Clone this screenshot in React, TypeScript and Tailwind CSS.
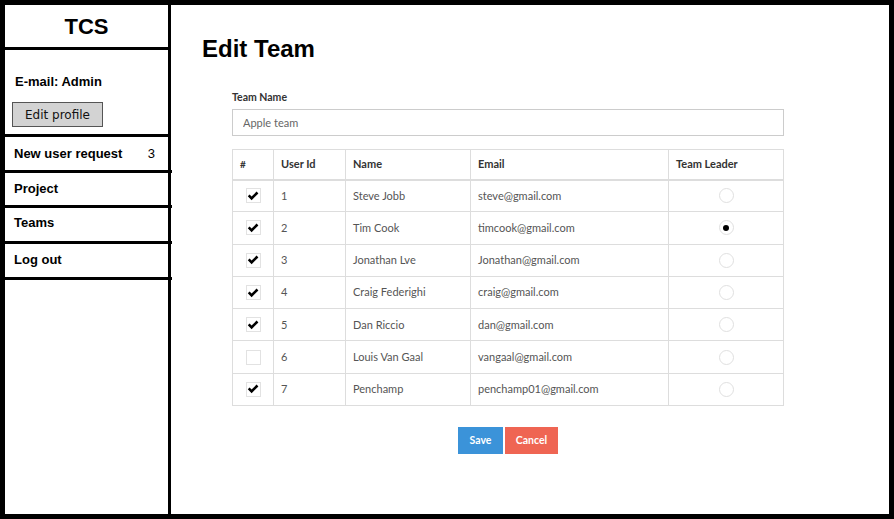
const members = [
  { id: 1, name: "Steve Jobb", email: "steve@gmail.com", checked: true, leader: false },
  { id: 2, name: "Tim Cook", email: "timcook@gmail.com", checked: true, leader: true },
  { id: 3, name: "Jonathan Lve", email: "Jonathan@gmail.com", checked: true, leader: false },
  { id: 4, name: "Craig Federighi", email: "craig@gmail.com", checked: true, leader: false },
  { id: 5, name: "Dan Riccio", email: "dan@gmail.com", checked: true, leader: false },
  { id: 6, name: "Louis Van Gaal", email: "vangaal@gmail.com", checked: false, leader: false },
  { id: 7, name: "Penchamp", email: "penchamp01@gmail.com", checked: true, leader: false },
];

const menu = [
  { label: "New user request", count: 3, cls: "h-[36px]" },
  { label: "Project", cls: "h-[35px]" },
  { label: "Teams", cls: "h-[36px] pb-[3px]" },
  { label: "Log out", cls: "h-[36px] pb-[2px]" },
];

function Sidebar() {
  return (
    <aside className="w-[166px] shrink-0 border-r-[3px] border-black font-['Liberation_Sans',Arial,sans-serif] text-black">
      <div className="h-[45px] flex items-center justify-center border-b-[3px] border-black text-[22px] font-bold">
        TCS
      </div>
      <div className="h-[87px] px-[10px] pt-[24px] border-b-[3px] border-black">
        <div className="text-[13px] font-bold leading-4">E-mail: Admin</div>
        <button className="mt-[12px] -ml-[3px] w-[91px] h-[25px] bg-[#d3d3d3] border border-[#555] text-[12px] font-['DejaVu_Sans',sans-serif] text-[#111]">
          Edit profile
        </button>
      </div>
      {menu.map((m) => (
        <div
          key={m.label}
          className={`${m.cls} -mr-[4px] pl-[9px] pr-[17px] flex items-center justify-between border-b-[3px] border-black text-[13px] font-bold`}
        >
          <span>{m.label}</span>
          {m.count !== undefined && <span className="font-normal">{m.count}</span>}
        </div>
      ))}
    </aside>
  );
}

function Checkbox({ checked }: { checked: boolean }) {
  return (
    <span className="mx-auto flex w-[15px] h-[15px] items-center justify-center border border-[#e2e2e2] bg-white">
      {checked && (
        <svg width="12" height="10" viewBox="0 0 12 10">
          <path d="M0.8 5.2 L2.6 3.4 L4.6 5.4 L9.6 0.6 L11.4 2.4 L4.6 9.2 Z" fill="#000" />
        </svg>
      )}
    </span>
  );
}

function Radio({ on }: { on: boolean }) {
  return (
    <span className="mx-auto flex w-[15px] h-[15px] items-center justify-center rounded-full border border-[#e0e0e0] bg-white">
      {on && <span className="w-[6px] h-[6px] rounded-full bg-black" />}
    </span>
  );
}

export default function App() {
  return (
    <div className="w-[894px] h-[519px] bg-white border-[5px] border-black flex overflow-hidden">
      <Sidebar />
      <main className="flex-1 pl-[31px] pt-[30px]">
        <h1 className="font-['Liberation_Sans',Arial,sans-serif] text-[24px] font-bold text-black leading-7">Edit Team</h1>
        <div className="ml-[30px] w-[552px] mt-[26px] font-['Lato',sans-serif] text-[#333]">
          <label className="block text-[10.5px] font-bold leading-4 text-[#333]">Team Name</label>
          <input
            className="mt-[4px] w-full h-[27px] border border-[#ccc] px-[10px] text-[11px] text-[#666] outline-none"
            defaultValue="Apple team"
          />
          <table className="mt-[13px] w-full border-collapse text-[11px]">
            <thead>
              <tr className="h-[30px] text-left">
                <th className="w-[41px] border border-[#ddd] border-b-2 px-[7px] font-bold text-[10px]">#</th>
                <th className="w-[72px] border border-[#ddd] border-b-2 px-[7px] font-bold">User Id</th>
                <th className="w-[125px] border border-[#ddd] border-b-2 px-[7px] font-bold">Name</th>
                <th className="w-[198px] border border-[#ddd] border-b-2 px-[7px] font-bold">Email</th>
                <th className="border border-[#ddd] border-b-2 px-[7px] font-bold">Team Leader</th>
              </tr>
            </thead>
            <tbody>
              {members.map((m) => (
                <tr key={m.id} className="h-[32.3px]">
                  <td className="border border-[#ddd] px-[7px]">
                    <Checkbox checked={m.checked} />
                  </td>
                  <td className="border border-[#ddd] px-[7px] text-[#555]">{m.id}</td>
                  <td className="border border-[#ddd] px-[7px] text-[#555]">{m.name}</td>
                  <td className="border border-[#ddd] px-[7px] text-[#555]">{m.email}</td>
                  <td className="border border-[#ddd] px-[7px]">
                    <Radio on={m.leader} />
                  </td>
                </tr>
              ))}
            </tbody>
          </table>
          <div className="mt-[21px] flex justify-center gap-[2px]">
            <button className="w-[45px] h-[27px] bg-[#3b93d9] text-white text-[10.5px] font-bold">Save</button>
            <button className="w-[53px] h-[27px] bg-[#ef6553] text-white text-[10.5px] font-bold">Cancel</button>
          </div>
        </div>
      </main>
    </div>
  );
}
